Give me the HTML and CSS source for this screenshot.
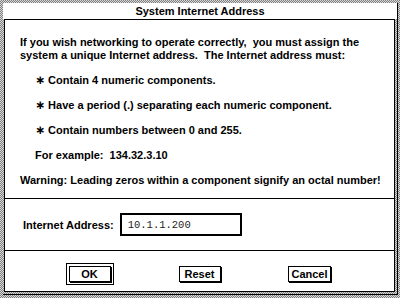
FILE: index.html
```html
<!DOCTYPE html>
<html lang="en">
<head>
  <meta charset="UTF-8" />
  <title>System Internet Address</title>
  <link rel="stylesheet" href="styles.css">
</head>
<body>
  <div class="window">
    <div class="title">System Internet Address</div>

    <div class="panel">
      <div class="message">
        <p>If you wish networking to operate correctly,&nbsp; you must assign the<br>
          system a unique Internet address.&nbsp; The Internet address must:</p>
        <p class="item"><span class="star">∗</span> Contain 4 numeric components.</p>
        <p class="item"><span class="star">∗</span> Have a period (.) separating each numeric component.</p>
        <p class="item"><span class="star">∗</span> Contain numbers between 0 and 255.</p>
        <p class="item">For example:&nbsp; 134.32.3.10</p>
        <p>Warning: Leading zeros within a component signify an octal number!</p>
      </div>

      <div class="address">
        <label for="addr">Internet Address:</label>
        <input type="text" id="addr" value="10.1.1.200" />
      </div>

      <div class="buttons">
        <div class="default-ring"><button>OK</button></div>
        <button>Reset</button>
        <button>Cancel</button>
      </div>
    </div>
  </div>
</body>
</html>
```

FILE: styles.css
```css
html, body {
  margin: 0;
  height: 298px;
  overflow: hidden;
}

body {
  background: repeating-conic-gradient(#808080 0 25%, #d8d8d8 0 50%) 0 0 / 2px 2px;
  font-family: "Liberation Sans", Arial, sans-serif;
  font-weight: bold;
  font-size: 11px;
  color: #000;
  padding-top: 3px;
  box-sizing: border-box;
}

.window {
  margin-left: 3px;
  width: 394px;
  height: 291px;
  border-right: 1px solid #000;
  border-bottom: 1px solid #000;
  display: flex;
  flex-direction: column;
}

.title {
  height: 16px;
  line-height: 16px;
  background: #fff;
  text-align: center;
  font-size: 11px;
}

.panel {
  margin: 0 2px 2px 1px;
  flex: 1;
  border: 1px solid #000;
  background: #fff;
  display: flex;
  flex-direction: column;
}

.message {
  height: 179px;
  border-bottom: 1px solid #000;
  padding: 16px 0 0 15px;
  box-sizing: border-box;
  display: flex;
  flex-direction: column;
  gap: 12px;
}

.message p {
  margin: 0;
  line-height: 13px;
}

.message .item {
  padding-left: 15px;
}

.star {
  font-family: "DejaVu Sans", sans-serif;
  font-size: 12px;
}

.address {
  height: 51px;
  border-bottom: 1px solid #000;
  display: flex;
  align-items: center;
  gap: 6px;
  padding-left: 18px;
}

.address input {
  width: 122px;
  height: 23px;
  box-sizing: border-box;
  border: 2px solid #000;
  padding: 0 6px;
  font-family: "Liberation Mono", "Courier New", monospace;
  font-size: 10.5px;
  color: #222;
  outline: none;
}

.buttons {
  flex: 1;
  display: grid;
  grid-template-columns: repeat(3, 110px);
  justify-content: center;
  justify-items: center;
  align-items: center;
  padding-top: 5px;
}

button {
  height: 16px;
  padding: 0 2px;
  min-width: 42px;
  border: 1px solid #000;
  box-shadow: 1px 1px 0 #000;
  background: #fff;
  font-family: "Liberation Sans", Arial, sans-serif;
  font-weight: bold;
  font-size: 11px;
  color: #000;
  line-height: 14px;
}

.default-ring {
  border: 1px solid #000;
  padding: 2px;
  display: flex;
}

.default-ring button {
  width: 38px;
}
```
